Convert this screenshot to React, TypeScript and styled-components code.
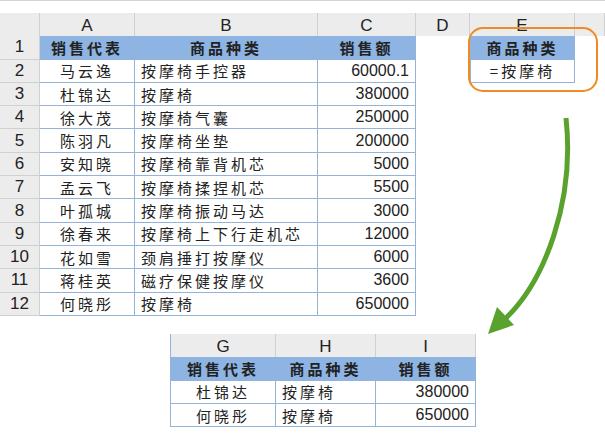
import React from 'react'
import styled, { createGlobalStyle } from 'styled-components'

const Global = createGlobalStyle`
  body { margin: 0; background: #fff; font-family: "Noto Sans CJK SC", "Liberation Sans", sans-serif; }
`

const rows: [string, string, string][] = [
  ['马云逸', '按摩椅手控器', '60000.1'],
  ['杜锦达', '按摩椅', '380000'],
  ['徐大茂', '按摩椅气囊', '250000'],
  ['陈羽凡', '按摩椅坐垫', '200000'],
  ['安知晓', '按摩椅靠背机芯', '5000'],
  ['孟云飞', '按摩椅揉捏机芯', '5500'],
  ['叶孤城', '按摩椅振动马达', '3000'],
  ['徐春来', '按摩椅上下行走机芯', '12000'],
  ['花如雪', '颈肩捶打按摩仪', '6000'],
  ['蒋桂英', '磁疗保健按摩仪', '3600'],
  ['何晓彤', '按摩椅', '650000'],
]

const Page = styled.div`
  position: relative;
  width: 605px;
  height: 439px;
  overflow: hidden;
  padding-top: 12px;
  box-sizing: border-box;
  border-top: 1px solid #d4d4d4;
`

const Grid = styled.div<{ $cols: string }>`
  display: grid;
  grid-template-columns: ${p => p.$cols};
  grid-auto-rows: 23.3px;
`

const Head = styled.div`
  background: #ececec;
  border-right: 1px solid #d0d0d0;
  border-bottom: 1px solid #c8c8c8;
  display: flex;
  align-items: center;
  justify-content: center;
  font-family: "Liberation Sans", sans-serif;
  font-size: 17px;
  color: #222;
  height: 25px;
`

const RowNum = styled(Head)`
  height: auto;
  border-bottom: 1px solid #d0d0d0;
`

const Cell = styled.div<{ $kind?: 'title' | 'left' | 'num' | 'center' | 'blank' }>`
  display: flex;
  align-items: center;
  padding: 0 6px;
  font-size: 15px;
  color: #222;
  letter-spacing: 3px;
  border-right: 1px solid ${p => (p.$kind === 'blank' ? 'transparent' : '#95b3d7')};
  border-bottom: 1px solid ${p => (p.$kind === 'blank' ? 'transparent' : '#95b3d7')};
  justify-content: ${p => (p.$kind === 'num' ? 'flex-end' : p.$kind === 'left' ? 'flex-start' : 'center')};
  background: ${p => (p.$kind === 'title' ? '#8db4e2' : '#fff')};
  font-weight: ${p => (p.$kind === 'title' ? 700 : 400)};
  ${p => p.$kind === 'num' && 'font-family: "Liberation Sans", sans-serif; letter-spacing: 0; font-size: 16px;'}
`

const Bottom = styled.div`
  position: absolute;
  left: 170px;
  top: 333px;
  border-left: 1px solid #95b3d7;
`

const Overlay = styled.svg`
  position: absolute;
  left: 0;
  top: 0;
  pointer-events: none;
`

export default function App() {
  return (
    <Page>
      <Global />
      <Grid $cols="40px 95px 183px 98px 54px 105px 30px">
        <Head />
        {['A', 'B', 'C', 'D', 'E', ''].map((c, i) => <Head key={i}>{c}</Head>)}
        <RowNum>1</RowNum>
        <Cell $kind="title">销售代表</Cell>
        <Cell $kind="title">商品种类</Cell>
        <Cell $kind="title">销售额</Cell>
        <Cell $kind="blank" />
        <Cell $kind="title" style={{ borderLeft: '1px solid #95b3d7' }}>商品种类</Cell>
        <Cell $kind="blank" />
        {rows.map((r, i) => (
          <React.Fragment key={i}>
            <RowNum>{i + 2}</RowNum>
            <Cell $kind="center">{r[0]}</Cell>
            <Cell $kind="left">{r[1]}</Cell>
            <Cell $kind="num">{r[2]}</Cell>
            <Cell $kind="blank" />
            {i === 0 ? <Cell $kind="center" style={{ borderLeft: '1px solid #95b3d7' }}>=按摩椅</Cell> : <Cell $kind="blank" />}
            <Cell $kind="blank" />
          </React.Fragment>
        ))}
      </Grid>
      <Bottom>
        <Grid $cols="105px 100px 100px">
          {['G', 'H', 'I'].map(c => <Head key={c}>{c}</Head>)}
          <Cell $kind="title">销售代表</Cell>
          <Cell $kind="title">商品种类</Cell>
          <Cell $kind="title">销售额</Cell>
          {[rows[1], rows[10]].map((r, i) => (
            <React.Fragment key={i}>
              <Cell $kind="center">{r[0]}</Cell>
              <Cell $kind="left">{r[1]}</Cell>
              <Cell $kind="num">{r[2]}</Cell>
            </React.Fragment>
          ))}
        </Grid>
      </Bottom>
      <Overlay width="605" height="439">
        <rect x="469" y="27" width="128" height="63" rx="14" fill="none" stroke="#f08a24" strokeWidth="2" />
        <path d="M566 117 C 575 200, 545 280, 505 318" fill="none" stroke="#5aa22e" strokeWidth="5" />
        <polygon points="488,333 497,306 514,324" fill="#5aa22e" />
      </Overlay>
    </Page>
  )
}
